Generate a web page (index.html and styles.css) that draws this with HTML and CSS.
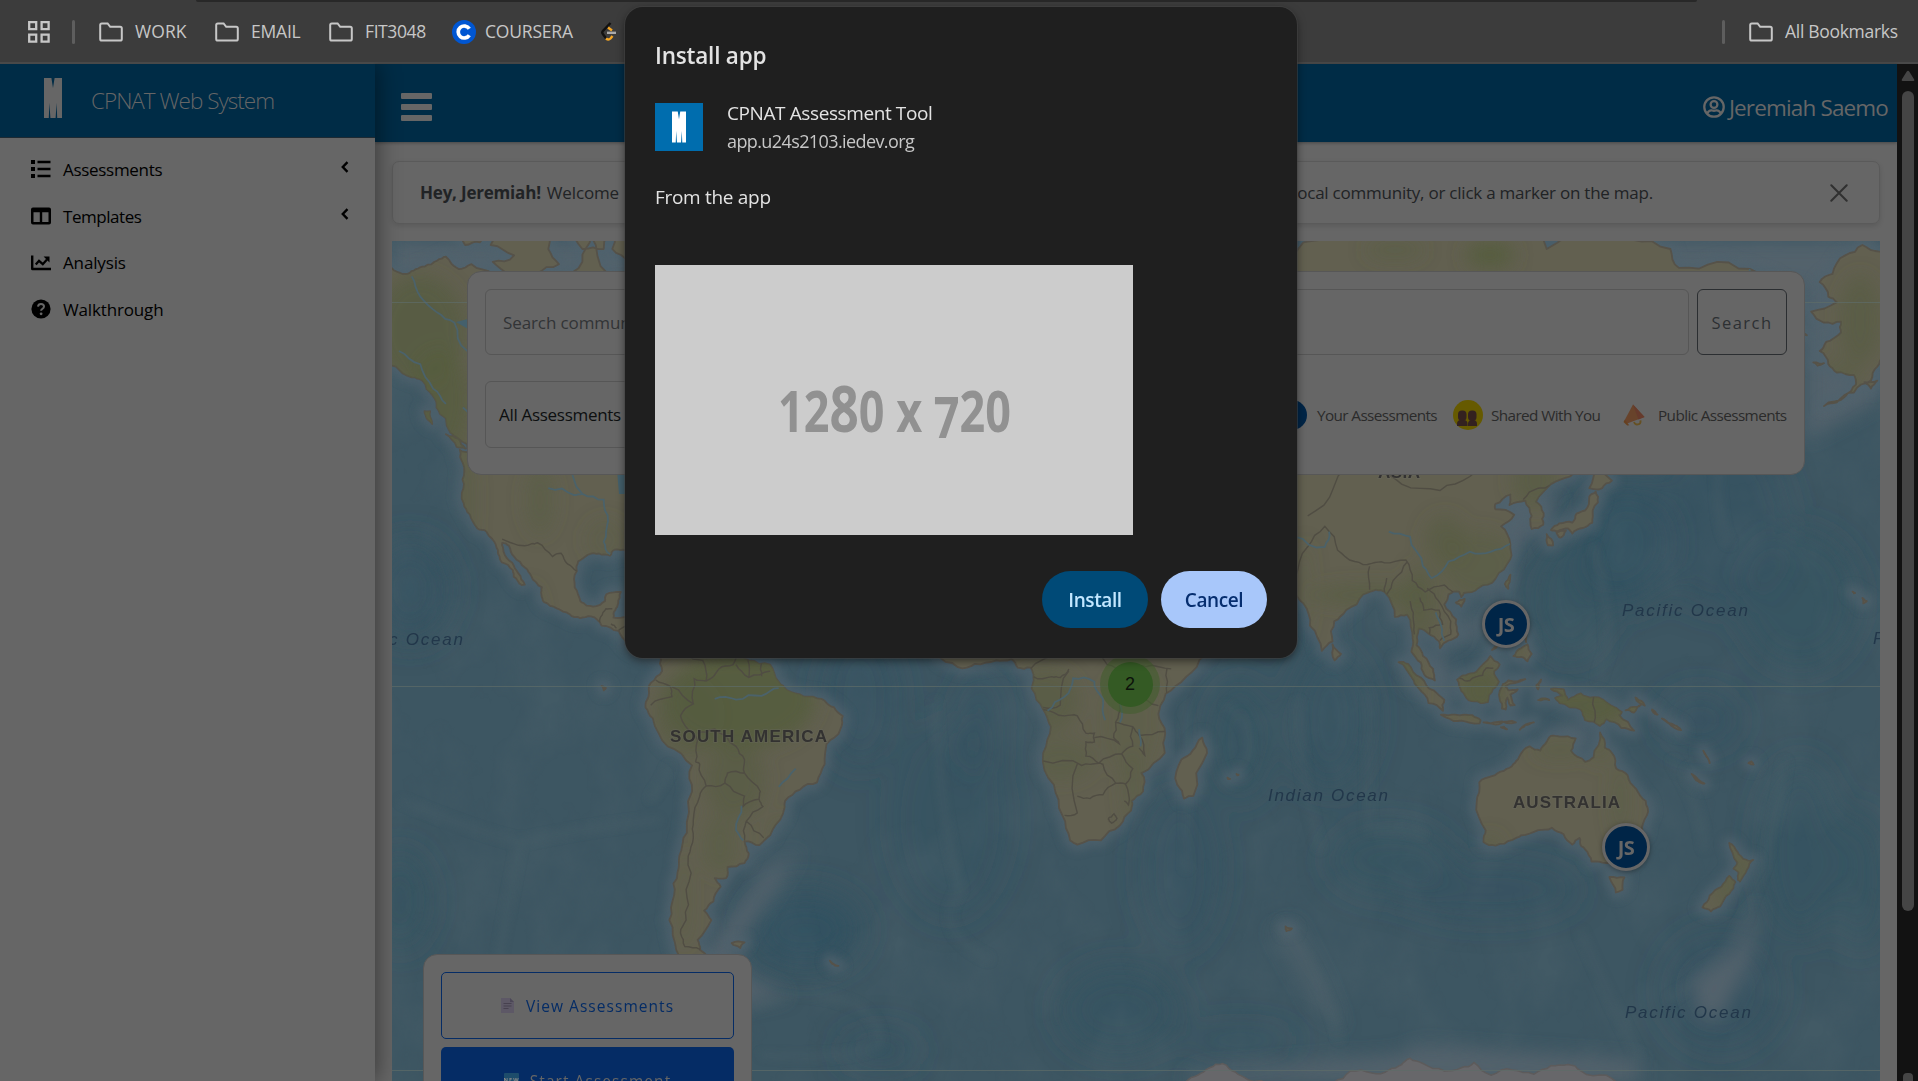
FILE: index.html
```html
<!DOCTYPE html>
<html lang="en">
<head>
<meta charset="utf-8">
<title>CPNAT Web System</title>
<link rel="stylesheet" href="styles.css">
</head>
<body>
<svg width="0" height="0" class="defs">
  <symbol id="folder" viewBox="0 0 24 24"><path d="M1.200 5q0-1.600 1.600-1.600h5.800l2.600 3.400h10q1.600 0 1.600 1.600v10.600q0 1.600-1.600 1.600H2.800q-1.600 0-1.600-1.600z" fill="none" stroke="currentColor" stroke-width="2"/></symbol>
  <symbol id="logo" viewBox="0 0 18 40"><path d="M0 0h7.400l1.600 10L10.600 0H18v40h-4.800l-.6-15-1 15H6.400l-1-15-.6 15H0z" fill="currentColor"/></symbol>
  <symbol id="chev" viewBox="0 0 8 12"><path d="M6.500 1.200L1.800 6l4.700 4.800" fill="none" stroke="#000" stroke-width="2.400"/></symbol>
</svg>
<div class="toolbar-edge"></div>
<header class="bookmarks">
  <svg class="apps" viewBox="0 0 22 22"><g fill="none" stroke="#c7c7c7" stroke-width="2.300"><path d="M1.200 1.200h7v7h-7zM13.600 1.200h7v7h-7zM1.200 13.600h7v7h-7zM13.600 13.600h7v7h-7z"/></g></svg>
  <i class="divider"></i>
  <span class="bm bm-work"><svg><use href="#folder"/></svg><b>WORK</b></span>
  <span class="bm bm-email"><svg><use href="#folder"/></svg><b>EMAIL</b></span>
  <span class="bm bm-fit"><svg><use href="#folder"/></svg><b>FIT3048</b></span>
  <span class="bm bm-coursera"><svg viewBox="0 0 24 24"><circle cx="12" cy="12" r="12" fill="#0056d2"/><path d="M17.300 8.800a6 6 0 1 0 0 6.400" fill="none" stroke="#fff" stroke-width="3.700"/></svg><b>COURSERA</b></span>
  <svg class="leet" viewBox="0 0 16 20"><path d="M9.500 1L2 8.800q-1.500 1.700 0 3.400l3 4" fill="none" stroke="#111" stroke-width="2.400"/><path d="M7 5.500l4 3M5 16.500q2.500 2 4.500 0l2-2.500" fill="none" stroke="#f5a623" stroke-width="2.400"/><path d="M6 10.800h9" stroke="#aaa" stroke-width="2.400"/></svg>
  <i class="divider divider-end"></i>
  <span class="bm bm-all"><svg><use href="#folder"/></svg><b>All Bookmarks</b></span>
</header>
<div class="page">
  <aside class="sidebar">
    <div class="brand"><svg class="brand-logo"><use href="#logo"/></svg><span>CPNAT Web System</span></div>
    <nav>
      <a><svg viewBox="0 0 20 20"><path d="M0 1h4v4H0zM0 8h4v4H0zM0 15h4v4H0zM6.500 1.800h13v2.400h-13zM6.500 8.800h13v2.400h-13zM6.500 15.800h13v2.400h-13z"/></svg><span class="t1">Assessments</span><svg class="chev"><use href="#chev"/></svg></a>
      <a><svg viewBox="0 0 20 20"><path fill-rule="evenodd" d="M2 1.500h16q2 0 2 2v13q0 2-2 2H2q-2 0-2-2v-13q0-2 2-2zM2.500 6.200v9.800h6.300V6.200zm8.700 0v9.800h6.300V6.200z"/></svg><span class="t2">Templates</span><svg class="chev"><use href="#chev"/></svg></a>
      <a><svg viewBox="0 0 20 20"><path d="M0 2.500h2.400v12.200H20v2.500H1.500q-1.500 0-1.500-1.500z"/><path d="M4.800 11.500L8 7.800l3.800 3.400 4.200-4.700" fill="none" stroke="#000" stroke-width="2.300"/><path d="M12.600 3.500H18.500v6z"/></svg><span class="t3">Analysis</span></a>
      <a><svg viewBox="0 0 20 20"><circle cx="10" cy="10" r="9.600"/><path d="M7 7.600q.3-2.600 3-2.600 3 0 3 2.500 0 1.500-1.600 2.300-1.300.7-1.300 2" fill="none" stroke="#666" stroke-width="2"/><circle cx="10.100" cy="14.800" r="1.400" fill="#666"/></svg><span class="t4">Walkthrough</span></a>
    </nav>
  </aside>
  <main>
    <div class="topbar">
      <div class="burger"><i></i><i></i><i></i></div>
      <div class="user"><svg viewBox="0 0 24 24" fill="none" stroke="#666" stroke-width="2.500"><circle cx="12" cy="12" r="10.600"/><circle cx="12" cy="9.200" r="3.700"/><path d="M4.800 19q1.500-3.600 5-3.200 2.200.6 4.400 0 3.500-.4 5 3.200"/></svg><span>Jeremiah Saemo</span></div>
    </div>
    <div class="content">
      <div class="alert">
        <strong>Hey, Jeremiah!</strong><span class="welcome">Welcome</span>
        <span class="hint">local community, or click a marker on the map.</span>
        <svg class="close" viewBox="0 0 18 18"><path d="M1.300 1.300l15.400 15.400M16.700 1.300L1.300 16.700" stroke="#303030" stroke-width="2" stroke-linecap="round"/></svg>
      </div>
      <div class="map">
        <svg id="world" viewBox="392 241 1488 840" width="1488" height="840"></svg>
        <span class="pin pin-ph">JS</span>
        <span class="pin pin-au">JS</span>
        <span class="cluster"><b>2</b></span>
        <section class="search-card">
          <div class="row">
            <div class="input"><span>Search communities</span></div>
            <div class="search-btn"><span>Search</span></div>
          </div>
          <div class="row row-filter">
            <div class="select"><span>All Assessments</span></div>
            <div class="legend">
              <i class="dot"></i><span class="l1">Your Assessments</span>
              <svg class="shared" viewBox="0 0 30 30"><circle cx="15" cy="15" r="15" fill="#665a00"/><g fill="#33211f"><path d="M4 26v-2q0-4 4-4h2.500q4 0 4 4v2zM15 26v-2q0-4 4-4h1q4 0 4 4v2z"/><rect x="5" y="10.500" width="8.500" height="10.500" rx="4"/><rect x="15" y="10.500" width="8.500" height="10.500" rx="4"/></g></svg>
              <span class="l2">Shared With You</span>
              <svg class="horn" viewBox="0 0 22 22"><path d="M10 .5L21.500 13 4 19.500 1.500 16.500z" fill="#68432b"/><path d="M10 .5L21.500 13l-6 2.500z" fill="#663a2c"/><path d="M1.800 15.800l4.400 5.400-2 .3L.5 18z" fill="#66401f"/><path d="M11 18q1 3 4 2.400t2.500-4" fill="none" stroke="#665022" stroke-width="1.800"/></svg>
              <span class="l3">Public Assessments</span>
            </div>
          </div>
        </section>
        <section class="actions">
          <div class="btn outline"><svg viewBox="0 0 13 15"><path d="M0 0h9l4 4v11H0z" fill="#5d5866"/><path d="M9 0v4h4" fill="#4c4757"/><path d="M2.500 5.500h8M2.500 8h8M2.500 10.500h5" stroke="#47414f" stroke-width="1"/></svg><span>View Assessments</span></div>
          <div class="btn solid"><svg viewBox="0 0 15 15"><rect width="15" height="15" rx="1" fill="#1d4c6b"/><text x="7.500" y="8.500" font-size="5.500" font-weight="700" text-anchor="middle" fill="#8a8a8a">NEW</text></svg><span>Start Assessment</span></div>
        </section>
      </div>
    </div>
  </main>
  <div class="scroll"><svg viewBox="0 0 14 12"><path d="M7 .8q.8 0 1.400 1l4.800 7.700q.6 1.500-1 1.500H1.800q-1.600 0-1-1.500L5.600 1.800Q6.200.8 7 .8z" fill="#454545"/></svg><i></i><em></em></div>
</div>
<div class="dialog">
  <h1><span>Install app</span></h1>
  <div class="app">
    <div class="app-icon"><svg><use href="#logo"/></svg></div>
    <div class="app-text"><span class="name">CPNAT Assessment Tool</span><span class="url">app.u24s2103.iedev.org</span></div>
  </div>
  <p><span>From the app</span></p>
  <div class="shot"><svg viewBox="0 0 478 270"><text x="123" y="167" textLength="233" lengthAdjust="spacingAndGlyphs">12<tspan font-size="65">8</tspan>0 x <tspan dy="6">7</tspan><tspan dy="-6">20</tspan></text></svg></div>
  <div class="buttons"><span class="install"><b>Install</b></span><span class="cancel"><b>Cancel</b></span></div>
</div>
<script src="map.js"></script>
</body>
</html>
```
FILE: styles.css
```css
*{box-sizing:border-box}
body{margin:0;width:1918px;height:1081px;overflow:hidden;position:relative;background:#666;font-family:"Open Sans","Noto Sans",sans-serif;font-size:17px;color:#000}
.defs{position:absolute}
svg{display:block;flex:none}
span,b{white-space:nowrap}
.toolbar-edge{position:absolute;left:196px;top:0;width:1501px;height:2px;background:#282828;border-radius:0 0 8px 8px}
.bookmarks{height:64px;background:#3c3c3c;border-bottom:2px solid #494949;display:flex;align-items:center;padding:2px 20px 0 28px;color:#c7c7c7}
.apps{width:22px;height:22px}
.divider{width:3px;height:24px;border-radius:2px;background:#5e5e5e;margin-left:22px}
.bm{display:flex;align-items:center;gap:12px}
.bm svg{width:24px;height:24px}
.bm b{font-weight:400;font-size:17.5px;padding-bottom:2px}
.bm-work{margin-left:24px;width:116px}
.bm-email{width:114px}
.bm-fit{width:123px}
.bm-coursera{width:148px}
.bm-coursera b{margin-left:-3px}
.bm-work b{letter-spacing:.1px}
.bm-email b{letter-spacing:-.2px}
.bm-fit b{letter-spacing:-.4px}
.bm-coursera b{letter-spacing:-.2px}
.bm-all b{letter-spacing:-.3px}
.leet{width:16px;height:20px;margin-left:1px}
.divider-end{margin-left:auto;margin-right:24px}
.bm-all{width:149px}
.page{display:flex;height:1017px}
.sidebar{width:375px;background:#666;box-shadow:2px 0 22px rgba(0,0,0,.45);position:relative;clip-path:inset(0 -40px 0 0)}
.brand{height:74px;background:#002c46;border-bottom:1px solid #1d2a33;display:flex;align-items:center;padding-left:44px;color:#666}
.brand-logo{width:18px;height:40px;margin-top:-6px}
.brand span{margin-left:29px;font-size:22.5px;font-weight:350;letter-spacing:-1px}
nav{padding-top:8px}
nav a{display:flex;align-items:center;height:46.700px;padding:0 26px 0 31px}
nav a>svg:first-child{width:20px;height:20px;margin-right:12px}
nav .chev{width:8px;height:12px;margin:-4px 0 0 auto}
nav span{font-size:17px;letter-spacing:-.3px}
nav .t2{letter-spacing:-.45px}
nav .t3,nav .t4{letter-spacing:-.15px}
main{flex:1;min-width:0;background:#666}
.topbar{height:78px;background:#002c46;display:flex;align-items:center;justify-content:space-between;padding:8px 9px 0 26px;box-shadow:0 1px 3px rgba(0,0,0,.3)}
.burger{display:flex;flex-direction:column;gap:5px}
.burger i{width:31px;height:6px;background:#666;border-radius:1px}
.user{display:flex;align-items:center;gap:4px;color:#666;font-size:22.500px}
.user svg{width:22px;height:22px}
.user span{letter-spacing:-.85px}
.content{padding:19px 17px 0}
.alert{height:63px;border:1px solid #5a5a5a;border-radius:7px;box-shadow:0 2px 5px rgba(0,0,0,.12);display:flex;align-items:center;padding:0 31px 0 27px;color:#212325;font-size:17px}
.alert strong{letter-spacing:-.2px}
.welcome{margin-left:6px;letter-spacing:-.15px}
.hint{margin-left:auto;margin-right:177px;letter-spacing:-.23px}
.close{width:18px;height:18px}
.map{position:relative;margin-top:17px;height:840px;width:1488px;overflow:hidden;background:#3d5661}
.pin,.cluster{position:absolute;border-radius:50%;display:flex;align-items:center;justify-content:center}
.pin{width:48px;height:48px;border:3px solid #666;background:#002547;color:#666;font-weight:700;font-size:20px;box-shadow:0 1px 5px rgba(0,0,0,.35);letter-spacing:-.5px}
.pin-ph{left:1090px;top:359px}
.pin-au{left:1210px;top:582px}
.cluster{width:60px;height:60px;left:708px;top:413px;background:rgba(66,94,46,.6)}
.cluster b{width:45px;height:45px;border-radius:50%;background:#345a24;color:#0c120a;display:flex;align-items:center;justify-content:center;font:18px "Liberation Sans",sans-serif}
.search-card,.actions{position:absolute;background:#666;border:1px solid #575757;border-radius:14px}
.search-card{left:75px;top:30px;width:1338px;height:204px;padding:17px 17px 0 17px}
.row{display:flex;gap:8px}
.input,.search-btn,.select{height:66px;border:1px solid #565656;border-radius:6px;display:flex;align-items:center}
.input{flex:1;padding-left:17px;color:#323436;letter-spacing:-.1px}
.search-btn{width:90px;border-color:#2b2e31;color:#2d3033;justify-content:center}
.search-btn span{letter-spacing:1.500px;font-size:16.5px}
.row-filter{margin-top:26px;align-items:center}
.select{width:400px;height:67px;padding-left:13px;color:#0d0f10;letter-spacing:-.3px}
.legend{margin-left:auto;display:flex;align-items:center;font-size:15.3px;letter-spacing:-.6px;color:#2b2b2b}
.dot{width:30px;height:30px;border-radius:50%;background:#002547;margin-right:10px}
.l1{width:136px}
.shared{width:30px;height:30px;margin-right:8px}
.l2{width:132px}
.horn{width:22px;height:26px;margin-right:13px}
.l3{width:129px}
.actions{left:31px;top:713px;width:329px;height:200px;padding:17px 17px 0 17px;display:flex;flex-direction:column;gap:8px}
.btn{height:67px;flex:none;border-radius:5px;display:flex;align-items:center;justify-content:center;font-size:15.5px;letter-spacing:1.050px}
.outline{border:1px solid #052c65;color:#052c65}
.solid{background:#052c65;color:#666}
.btn svg{width:13px;height:15px;margin-right:12px}
.btn.solid svg{width:15px;margin-right:11px}
.scroll{width:21px;background:#121212;display:flex;flex-direction:column;align-items:center;padding-top:8px}
.scroll svg{width:14px;height:12px;margin-top:-2px}
.scroll i{width:12px;height:822px;border-radius:6px;background:#454545;margin-top:9px}
.scroll em{width:10px;height:8px;border-radius:4px 4px 0 0;background:#454545;margin-top:162px}
.dialog{position:absolute;left:625px;top:7px;width:672px;height:651px;border-radius:18px;background:#1f1f1f;box-shadow:0 0 0 1px rgba(70,70,70,.5),0 3px 9px rgba(0,0,0,.5);padding:0 30px;color:#e3e3e3;display:flex;flex-direction:column}
h1{margin:32px 0 0;height:34px;line-height:34px;font-size:22.5px;font-weight:650;letter-spacing:-.2px}
.app{display:flex;margin-top:30px;gap:24px}
.app-icon{width:48px;height:48px;background:#006dae;color:#fff;display:flex;align-items:center;justify-content:center}
.app-icon svg{width:14px;height:32px}
.app-text{display:flex;flex-direction:column;margin-top:-4px}
.app-text span{height:28px;line-height:29px}
.name{font-size:19px;letter-spacing:-.4px}
.url{font-size:18px;letter-spacing:-.6px;color:#c7c7c7}
p{margin:28px 0 0;height:30px;line-height:28px;font-size:19px;letter-spacing:-.3px}
.shot{margin-top:52px;width:478px;height:270px;background:#ccc;flex:none}
.shot text{font:700 57px "Open Sans",sans-serif;fill:#919191}
.buttons{display:flex;justify-content:flex-end;gap:13px;margin-top:36px}
.buttons span{width:106px;height:57px;border-radius:29px;display:flex;align-items:center;justify-content:center;font-size:19px;letter-spacing:-.4px}
.buttons b{font-weight:600}
.install{background:#004a77;color:#c2e7ff}
.cancel{background:#a8c7fa;color:#062e6f}
```
FILE: map.js
```js
// Web Mercator projection of [lon, lat] pairs at the map's zoom level.
const X0 = 992, Y0 = 686, W = 1536;
const px = lon => X0 + lon * W / 360;
const py = lat => Y0 - W / (2 * Math.PI) * Math.asinh(Math.tan(lat * Math.PI / 180));

// Midpoint displacement gives coasts a natural, ragged line.
let seed = 7;
const rnd = () => (seed = (seed * 16807) % 2147483647) / 2147483647 - .5;
function rough(pts, closed) {
  for (let k = 0; k < 2; k++) {
    const out = [];
    pts.forEach((a, i) => {
      out.push(a);
      const b = pts[i + 1] || (closed && pts[0]);
      if (!b) return;
      const dx = b[0] - a[0], dy = b[1] - a[1], r = rnd() * .26;
      out.push([(a[0] + b[0]) / 2 - dy * r, (a[1] + b[1]) / 2 + dx * r]);
    });
    pts = out;
  }
  return pts;
}
function path(s, closed = true) {
  const n = s.trim().split(/[\s,]+/).map(Number), p = [];
  for (let i = 0; i < n.length; i += 2) p.push([px(n[i]), py(n[i + 1])]);
  return 'M' + rough(p, closed).map(q => q[0].toFixed(1) + ' ' + q[1].toFixed(1)).join('L') + (closed ? 'Z' : '');
}

const land = [
  // North and Central America
  '-160,70 -141,69.6 -137,69 -135,69.4 -133,69.6 -130,70.1 -128,70.4 -127,70 -125,69.4 -122,69.8 -117,69 -113,68 -108,68 -100,68 -96,70 -94,72 -90,69 -86,68 -60,45 -81,31 -80,25 -83,30 -84.5,30 -86.5,30.4 -88.5,30.4 -89.5,29.2 -91.5,29.4 -94,29.6 -97,28 -97.3,26 -97.8,22.5 -96.5,19.5 -95,18.5 -92,18.6 -90.7,19.5 -90.4,21 -87,21.5 -87.6,19 -88.3,17.5 -88.7,15.8 -85,15.9 -83.2,15 -83.7,12 -83,10 -81.500,9 -79.5,9.6 -77.400,8.6 -77.8,7 -79.5,8.8 -80.4,7.4 -83,8.3 -85.6,10 -87.5,12.8 -91.5,14 -94,16.1 -96.5,15.7 -99,16.6 -102,17.9 -105,19.3 -105.6,21 -105.5,22.5 -108,25 -109.4,26.7 -112,29 -113.2,31.2 -114.8,31.8 -114.5,30 -112.5,27.8 -111,25.5 -109.5,23.1 -110.2,23 -112.1,24.8 -112.3,26.2 -114.9,27.8 -115.8,30.3 -117.1,32.5 -118.5,34 -120.6,34.6 -122.4,37.3 -123.8,39.3 -124.3,40.4 -124.1,43.5 -124,46.2 -124.7,48.3 -122.5,48 -123,49.2 -127,51 -128,53 -130.2,54.5 -131,56 -133.5,58 -136,58.4 -139.7,59.7 -150,60',
  '-128,50.7 -125,50 -123.4,48.5 -125.5,48.8', '-133,54 -131.7,54 -131.2,52.2 -132.5,53',
  '-125,72.5 -123.500,71.300 -120,71.500 -118,72.500', '-117.5,71.3 -112,70.5 -117,70 -113,69 -107,69 -101.500,69.8 -104,71 -105,73 -117,73', '-99,72.500 -96,71 -91,71 -90,73', '-89,71 -85,70 -80,71 -80,73 -89,73',
  // Alaska
  '215,69.8 208,70.8 204,71.3 200,70.5 197,69 194,68.3 196,67 198,66.5 192,65.6 195,64.5 199,64.6 199,63.5 195.5,62.5 194,61.5 196,60 198,59 202,58.7 202.5,57.5 200,56 195,54.7 198,55.2 202,56.5 206,58 207.5,59.7 208.5,61 211,60 215,60', '204.500,57.800 207.500,58 206,57',
  '192.500,60.200 195,60.100 193.500,59.800', '188.5,63.5 191,63.2 190,63.7',
  // South America
  '-77.400,8.6 -75.5,10.6 -72,12 -71,11 -68,11 -62,10.7 -60,8.5 -57,6 -52,5 -50,1 -48,-1 -44,-2.5 -40,-3 -37,-5 -35,-7 -35.5,-10 -38.8,-13.5 -39.2,-18 -41,-22 -45,-23.6 -48.5,-26 -49,-28.7 -52,-33 -54.5,-34.9 -58,-34.2 -57,-36.5 -58,-38.3 -62,-39 -62.3,-41 -65,-41 -63.6,-42.5 -65.3,-45 -67.5,-46.5 -65.8,-48 -69,-51 -68.4,-52.5 -65.2,-54.8 -70,-55.2 -74,-52.5 -75.6,-48 -74.5,-44 -73.7,-40 -73.3,-37 -71.5,-32.5 -70.3,-24 -70.3,-18.3 -76,-14 -79.5,-7.5 -81.2,-5 -80.5,-2.5 -79.9,0.8 -77.3,3.5 -77.8,7',
  '-61,-51.500 -58,-51.400 -59,-52.200', '-91.500,0 -91,-1 -90.500,-.5',
  // Africa and Madagascar
  '-17,15 -13,8 -8,4.4 -4,5.2 1,6 4.5,6.3 6,4.3 9,4.3 9.7,2 9.3,-0.6 12,-5.5 13.8,-9.5 12,-15.5 14.5,-22.5 16.5,-29 18.3,-34 20,-34.8 25.5,-34 30,-31 32.6,-28 32.7,-26 35.4,-24 35,-20 40.5,-15.5 40.6,-11 39,-6.5 39.5,-4.5 43,0 48,4.5 51,10.5 43,12 30,30 -10,30',
  '49.3,-12 50.4,-15.5 47.2,-24.9 45,-25.5 43.4,-22.5 44.4,-17 47,-15',
  // Asia
  '60,68 68,68 73,71.5 80,72 85,73.5 110,74 127,73 130,71 140,72.5 150,71.7 159,71 161,69.5 170,70 180,69 190,66.4 180,63 178,62 163,61.5 155,59.5 143,59 137,54 141,53 140,48 135.5,44 131,42.7 127.5,39.6 129.3,37.5 129.2,35.3 126.5,34.5 126.5,37 125,39.8 121.3,39 121.5,40.9 118,39.2 118,38.2 122.4,37.2 119.3,35 121.5,31.5 121.5,28.5 118,24.4 114,22.4 110.5,21.3 110,20.4 109.500,21.600 107,21 106,18.8 108.8,15.4 109.3,12 107,10.6 105,8.8 104.800,10.4 102.3,12.2 100,13.3 99.5,9.5 101,7 103.4,4 103.8,1.3 101.3,2.7 100.5,5.5 98.3,8 98.6,11 97.3,16.5 94.4,16 92,21.5 90,22 87,21 83,17.5 80.2,15 79.8,10.4 77.3,8.2 74.5,14 73,19 71,21 60,25',
  '79.8,9.7 81.8,7.5 80.3,6', '108.7,19.2 110.8,20 110,18.3', '120.2,23.2 121.5,25.2 121,22.2',
  '130,33.5 131.5,31.3 130.3,31.3', '131,34.3 133,35.6 136,35.7 137,37.4 139,38 140,40.5 141.5,41.4 142,39.5 140.8,38 140.7,35.7 138.5,34.7 136,33.6 135,34.6 132.4,34', '140,42 141.7,45.4 145.3,43.3 143,42', '132.300,33.8 134.5,34.2 133.200,32.8',
  // South-east Asia
  '95.3,5.6 97.5,5.2 100.5,2 103.5,-1 106,-3.2 105.7,-5.8 102.3,-4 100,-0.5 98.5,1.8', '105.2,-6.7 108.6,-6.7 112.6,-6.8 114.5,-8 114.3,-8.7 110,-8.1 106.5,-7.4',
  '109,1.5 111,2.5 113.500,3.3 116.8,7 119,5 117.700,3.5 118.8,1 117.4,-0.7 116.2,-3.8 114.5,-4 111.7,-3.3 110,-1.2', '119.8,0.5 121,1.3 125,1.6 120.3,0 121,-1 123.2,-0.8 121.500,-2 122.500,-4.5 121.5,-4.6 120.800,-2.7 120.4,-5.5 119.5,-5.3 119,-3',
  '120.3,16 120.8,18.5 122.2,18.3 121.5,15.5 124,12.8 120.7,13.8', '122.2,7 123.5,8.6 125.5,9.7 126.5,7.5 125.5,5.8 124,6.8', '124.3,12.5 125.4,12.2 125.200,10.2', '122,11.8 123,11 122.3,9.800', '117.2,8.4 119.4,11.2 118.500,9.500', '127.600,.2 128.700,1.500 128,-.8',
  '123.7,-10.2 127,-8.5 125,-9.1', '115.200,-8.500 118.5,-8.4 122.8,-8.500 119,-8.900', '119.3,-9.6 120.7,-10.1 120,-9.500', '128,-3.300 130.6,-3.3 129,-2.900',
  '131,-0.7 134,-0.8 135,-3.3 138,-1.7 141,-2.6 145,-4.5 147.6,-6.1 147,-6.8 150.5,-10.4 147.500,-9.8 144,-7.7 142.5,-9.3 139,-8 138,-5.5 133,-4 132,-2.8 133.700,-2.3', '148.5,-5.7 151,-4.9 152.2,-4.3 150.500,-6.2', '150.8,-2.7 153,-4.6 152.200,-3.500', '154.7,-5.5 156,-6.7 155,-6.2', '157,-7.6 160,-9.2 161.5,-10.3 158.500,-8.600', '164,-20.200 167,-22.3 165.500,-21.800', '166.7,-15 167.400,-16.3 168.2,-17.8', '177.3,-17.8 178.5,-18.1 178,-17.4',
  // Australia and New Zealand
  '114.2,-22 117,-20.7 120,-19.5 122.2,-18 123.5,-16.5 126,-14 128.5,-15 130,-13 131,-11.6 133,-11.8 136.8,-12.2 135.7,-15 139,-17.5 141,-16.5 142.5,-10.8 143.6,-14.3 145.3,-15.5 146.3,-19 149,-20.5 151,-23.5 153.2,-26 153.5,-29 152.5,-32.3 150.3,-36 149.9,-37.5 146.4,-39 144,-38.3 140.5,-38 139,-35.7 138,-35 137.7,-33.5 136,-34.8 134,-32.8 131.200,-31.5 128,-32 124,-33 122,-33.9 118,-35 115.2,-34.3 115.7,-32 113.6,-26.3',
  '144.7,-40.8 148.2,-40.9 147.8,-43 146.2,-43.5', '172.8,-34.5 174.8,-36.3 176,-37.5 178.4,-37.7 177,-39.4 175.3,-41.6 174.800,-41.3 175,-40 173.8,-39.3 174.700,-38.2', '172.8,-40.6 174.2,-41.7 172.8,-43.7 170.7,-45.8 168.5,-46.6 166.5,-46 168.200,-44 171,-42.5',
  '204,20.2 205,19.5 204.2,19', '201.7,21.6 202.3,21.3 202,21.2', '68.8,-49 70.3,-49.3 69,-49.7', '-38,-54 -36,-54.700 -37.500,-54.4', '57.300,-20.2 57.8,-20.4 57.5,-20.5', '55.2,-21 55.8,-21.3 55.3,-21.3'
];
const ice = ['42,-69 46,-67.4 49,-66.8 51,-66.3 54,-65.9 57,-66.7 60,-67.4 66,-67.9 72,-69 80,-67.700 84,-66.6 89,-66.800 93,-66.5 96,-66 98,-65.400 101,-65.9 106,-66.6 110,-66.3 113,-65.800 117,-67 122,-66.5 127,-66.900 131,-66.100 135,-66 138,-66.6 144,-67 148,-68.5 150,-70 45,-72',
  '-64,-68 -61,-64.600 -57,-63.4 -59,-65 -62,-67'];
const borders = ['-114.8,32.5 -111,31.3 -108,31.6 -106.5,31.8 -103,29 -101,29.700 -99.5,27.5 -97.3,26', '-92,14.600 -91.700,16 -90.500,17.800 -89,17.8', '-89.3,14.4 -88,13.4', '-87.500,13 -83.200,15', '-85.600,11.1 -83.7,11',
  '-78.800,1.4 -75.5,0 -75,-2.5 -80,-4.5', '-75,-.2 -70,-4.2 -73,-7 -70,-11 -69,-12.5 -69.5,-17.5', '-70,-4.2 -69.800,1.700 -67,1.2 -67.8,6 -72,7.500 -72.500,11', '-69,-11 -65,-10 -60,-14 -58,-17 -58,-20 -62,-20 -62.6,-22.200 -67,-22.8 -68.5,-18 -69.5,-17.5', '-62.6,-22.2 -58,-25 -58.5,-27.3 -54.6,-25.6 -54.3,-24 -58,-20', '-54.6,-25.6 -53.7,-27.2 -57.6,-30.2 -58,-34', '-57.600,-30.2 -53.5,-33.5', '-67,-22.8 -68.5,-25 -70,-30 -70,-33.5 -71.2,-37 -71.7,-43 -71.7,-48 -73,-50 -72,-52 -68.400,-52.400', '-67,1.2 -64,4 -60.7,5 -60,8', '-60,5 -57,2 -52,3.500', '-57.200,6 -57,2', '-54,5.500 -54,2.300',
  '9,4 15,7 24,8 27,5 31,4 34,4.500 36,4.5 42,4', '12,-5.5 17,-7 20,-7 22,-11 24,-11 24,-13 22,-13 22,-16.2 25,-17.8 21,-18.300 12,-17.300', '20,-18 20,-28.500 17,-29', '20,-25 23,-25.5 26,-24.7 29,-22.2 26,-18 25,-17.8', '29,-22.2 31.3,-22.4 33,-19 30.4,-15.7 25,-17.8', '30.4,-15.7 33,-14 33,-9.5 29,-8.4 30,-4.5 29.500,-1.2 31,4', '29,-8.4 28.5,-12 29.800,-13.4 24,-12', '33,-9.5 34.5,-11.5 40.5,-10.600', '34,-1 39,-4.6', '34,-1 34.500,4.500', '34.500,-11.5 35.800,-16 34.5,-14.4', '31.3,-22.4 32,-26.800 31,-26', '9.700,2.200 14,2.200 16,2 18,4', '12,-5 16,-4.500 18,3.500', '41,-2 41,4', '27.200,-29.700 28.600,-28.700 29.300,-29.600 28,-30.600 27.200,-29.7',
  '71,24.500 74,31 78,35 81,30.3 85,28 89,27.6 92,27.700 97,28.3 98.5,24 101.5,21.5 106,23 108,21.5', '88.500,27 88.5,22', '92.500,24.5 92,21.5', '97.400,28 94,24 92.500,21', '98,19.500 98.700,16 99,12', '100.3,20.3 101.200,17.5 104.800,17.5 105.600,14.3 102.5,13.500 102.5,12', '102,22.3 104.700,19.500 107.5,15 107.500,12 105,10.600', '74,37 80,42 87,49 98,50 108,49.500 116,49.8 120,53', '88,48 92,45 96,42.700 105,41.600 112,44 117,46.7 120,47', '124.500,40 128,42 131,42.500', '109.6,1.8 112,1.3 115,2.5 115.800,4.2 117.500,4.2', '141,-2.6 141,-9'];
const rivers = ['-136,68.800 -134,67 -130,65.500 -126,64.500 -123,61.500 -117,61', '-139,61.500 -134,60 -131,57 -128,55', '-124,54.500 -120,52 -117,51 -116,56', '-105,48 -100,46.500 -96,41 -91,40 -90,36 -91,32 -89.500,29.500', '-104,42 -98,40.800 -96,41', '-50,-.500 -54,-2.300 -60,-3.2 -65,-3', '-58.300,-34 -60,-32 -58.700,-27', '-46,-19 -50,-23', '13,-5.8 17,-2.5 19,1.8 24,1 26,-3 26.500,-8', '30,-4 30,-8.500', '34.500,-10 34.800,-14', '93,34 98,33 101,27 103,24.500 107,28 112,30 117,30 121.5,31.6', '71,33 78,31 79,34', '104,17 105.5,13 106,10.5', '178,70 174,66'];
// Patches as [cx, cy, rx, ry, opacity].
const green = [[420,330,45,55,.7],[440,400,30,50,.8],[465,500,8,70,.6],[540,500,14,35,.5],[605,540,20,22,.3],[530,620,10,35,.5],[560,670,16,22,.6],[740,700,75,48,.9],[690,715,35,40,.6],[735,780,30,38,.6],[720,845,17,30,.5],[684,900,5,50,.5],[780,840,10,25,.4],[1045,700,34,32,.6],[1060,760,34,20,.5],[1130,720,30,55,.25],[1133,790,9,35,.5],[1370,595,60,9,.7],[1480,565,38,34,.5],[1420,605,16,40,.6],[1445,540,20,24,.6],[1535,480,22,28,.6],[1480,690,22,26,.8],[1400,690,18,40,.7],[1430,730,32,5,.8],[1585,705,55,18,.8],[1510,640,9,24,.7],[1600,735,10,30,.5],[1560,750,28,9,.4],[1620,800,8,40,.4],[1490,855,12,20,.5],[1615,920,8,10,.8],[1735,880,22,35,.5],[1305,590,6,50,.3],[1860,320,20,45,.6],[1490,255,24,14,.9],[1395,250,30,10,.4],[1840,375,20,15,.4]];
const deep = [[410,590,40,50,.8],[400,900,30,50,.5],[805,930,55,38,1],[860,700,40,70,.4],[950,820,60,100,.3],[980,720,22,50,.4],[1180,870,40,80,.4],[1120,1010,60,45,.6],[1240,740,30,60,.5],[1330,720,40,70,.7],[1390,860,60,35,.5],[1490,890,90,28,.4],[1625,545,45,60,.9],[1570,600,40,60,.5],[1720,520,70,90,.4],[1800,600,60,70,.5],[1700,720,40,30,.4],[1800,850,40,90,.6],[1720,990,60,60,.4],[1860,880,22,70,.5],[1320,600,20,50,.4],[1240,1040,60,16,.3],[880,1050,40,20,.4]];
const ridges = ['M400 800Q470 830 520 842Q600 825 660 820M520 842Q505 920 490 1010M650 800Q665 780 670 765', 'M935 700Q940 820 960 890Q930 930 990 960', 'M1225 705Q1250 720 1250 755Q1240 770 1237 775M1185 700Q1190 790 1186 870', 'M1298 700Q1300 780 1320 850', 'M1365 830Q1390 825 1425 835M1368 830L1370 690', 'M1592 545Q1610 600 1608 650L1598 680M1718 470Q1718 530 1730 545', 'M1672 760Q1700 800 1705 850M1785 760Q1775 840 1750 900Q1735 960 1668 1000', 'M1275 920Q1320 960 1340 1040M1580 930Q1610 1000 1640 1060', 'M751 1010Q800 985 840 1000Q880 1010 880 1045Q850 1060 760 1055'];

const el = list => list.map(([x, y, rx, ry, o]) => `<ellipse cx="${x}" cy="${y}" rx="${rx}" ry="${ry}" opacity="${o}"/>`).join('');
const landPath = land.map(s => path(s)).join('');
const icePath = ice.map(s => path(s)).join('');
const lines = list => list.map(s => path(s, false)).join('');

document.getElementById('world').innerHTML = `
<defs>
  <clipPath id="lc"><path d="${landPath}"/></clipPath>
  <filter id="b4" x="-20%" y="-20%" width="140%" height="140%"><feGaussianBlur stdDeviation="4"/></filter>
  <filter id="b9" x="-50%" y="-50%" width="200%" height="200%"><feGaussianBlur stdDeviation="9"/></filter>
  <filter id="b16" x="-20%" y="-20%" width="140%" height="140%"><feGaussianBlur stdDeviation="16"/></filter>
  <filter id="relief" x="0" y="0" width="100%" height="100%" color-interpolation-filters="sRGB"><feTurbulence type="fractalNoise" baseFrequency=".016 .012" numOctaves="5" seed="4"/><feColorMatrix values="0 0 0 0 .36  0 0 0 0 .43  0 0 0 0 .46  2.600 0 0 0 -1.050"/></filter>
</defs>
<rect x="392" y="241" width="1488" height="840" fill="#3d5662"/>
<g fill="#325160" filter="url(#b16)">${el(deep)}</g>
<rect x="392" y="241" width="1488" height="840" filter="url(#relief)" opacity=".16"/>
<g fill="none" stroke="#4b6069" stroke-width="4" filter="url(#b4)" opacity=".6">${ridges.map(d => `<path d="${d}"/>`).join('')}</g>
<g fill="#52626c" filter="url(#b9)">
  <path d="M392 241H640V285H392zM1600 241H1880V400L1805 440V285H1600z" /><path d="M735 950L800 850L765 870L700 960L720 1010L790 995L745 975z"/>
  <path d="M1495 600L1510 560L1560 500L1500 480L1480 640L1440 640zM1400 680L1460 700L1440 650zM1530 760L1600 740L1570 720zM1700 1020L1690 980L1735 950L1760 900L1750 960L1720 1020z"/>
  <path d="M1200 1070L1400 1055L1420 1045L1640 1060V1081H1180z"/>
  <path d="M1270 930L1295 920L1325 980L1345 1030L1315 1010z" opacity=".6"/>
</g>
<path d="${landPath}" fill="none" stroke="#50626d" stroke-width="14" stroke-linejoin="round" filter="url(#b4)" opacity=".75"/>
<path d="${icePath}" fill="#67676a" stroke="#5d5b5b" stroke-width="1.500"/>
<path d="${landPath}" fill="#626050" stroke="#565249" stroke-width="1.800" stroke-linejoin="round"/>
<g clip-path="url(#lc)">
  <g fill="#555c3f" filter="url(#b9)">${el(green)}</g>
  <path d="${lines(borders)}" fill="none" stroke="#504d43" stroke-width="1.400"/>
  <path d="${lines(rivers)}" fill="none" stroke="#4b626a" stroke-width="1.800"/>
  <path d="M1127 686l8-2 2 8-8 3zM456 322l12-3v10zM617 470h10v24h-8z" fill="#44606c"/>
</g>
<path d="M392 302.500H1880M392 686.500H1880M392 1070.500H1880" stroke="#5f6d69" stroke-width="1" opacity=".7"/>
<g font-family="'Liberation Sans',Arial,sans-serif" font-weight="700" font-size="17" fill="#333231" stroke="#6a6a60" stroke-opacity=".35" stroke-width="2" paint-order="stroke">
  <text x="670" y="742" textLength="157">SOUTH AMERICA</text>
  <text x="1513" y="808" textLength="107">AUSTRALIA</text>
  <text x="1378" y="478" textLength="42">ASIA</text>
</g>
<g font-family="'Liberation Sans',Arial,sans-serif" font-style="italic" font-size="17" fill="#22374a">
  <text x="337" y="645" textLength="126">Pacific Ocean</text>
  <text x="1268" y="801" textLength="120">Indian Ocean</text>
  <text x="1622" y="616" textLength="126">Pacific Ocean</text>
  <text x="1625" y="1018" textLength="126">Pacific Ocean</text>
  <text x="1873" y="644" textLength="126">Pacific Ocean</text>
</g>`;
```
